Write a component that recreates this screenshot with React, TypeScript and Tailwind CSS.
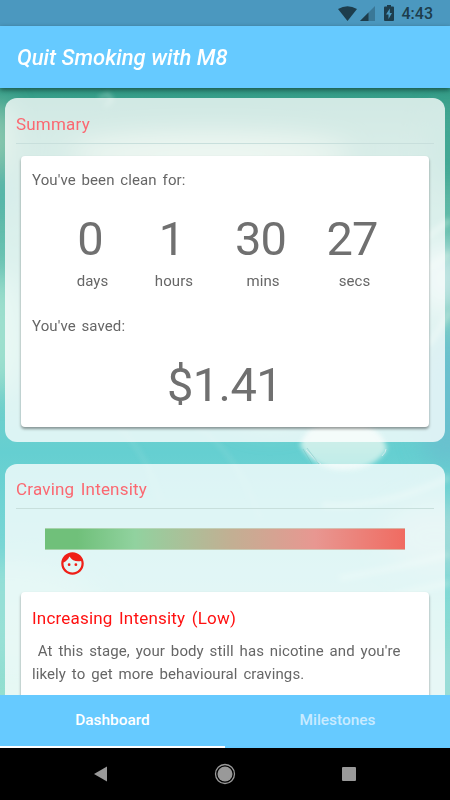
import React from 'react';
import { MdFace } from 'react-icons/md';

const counters = [
  { value: '0', label: 'days', width: 'w-[81px]' },
  { value: '1', label: 'hours', width: 'w-[82px]' },
  { value: '30', label: 'mins', width: 'w-[96px]' },
  { value: '27', label: 'secs', width: 'w-[87px]' },
];

// Blurred water and flower artwork behind the panels
const Backdrop: React.FC = () => (
  <svg className="absolute inset-0 w-full h-full" viewBox="0 0 450 607" preserveAspectRatio="none" aria-hidden="true">
    <defs>
      <linearGradient id="water" x1="0" y1="0" x2="0" y2="1">
        <stop offset="0" stopColor="#319b86" />
        <stop offset=".09" stopColor="#55ad99" />
        <stop offset=".25" stopColor="#65bfae" />
        <stop offset=".42" stopColor="#7dd0c5" />
        <stop offset=".6" stopColor="#65cfd1" />
        <stop offset=".8" stopColor="#7ed8d6" />
        <stop offset="1" stopColor="#94dfd0" />
      </linearGradient>
      <filter id="soft" x="-50%" y="-50%" width="200%" height="200%">
        <feGaussianBlur stdDeviation="13" />
      </filter>
      <filter id="fine" x="-20%" y="-50%" width="140%" height="200%">
        <feGaussianBlur stdDeviation="2.5" />
      </filter>
      <linearGradient id="petal" x1="0" y1="0" x2="0" y2="1">
        <stop offset="0" stopColor="#d8f2ea" />
        <stop offset="1" stopColor="#bdebe8" />
      </linearGradient>
    </defs>
    <rect width="450" height="607" fill="url(#water)" />
    <g filter="url(#soft)">
      <ellipse cx="210" cy="66" rx="140" ry="20" fill="#c8e4cc" opacity=".85" />
      <ellipse cx="-2" cy="48" rx="12" ry="35" fill="#a3d4b9" />
      <ellipse cx="2" cy="105" rx="16" ry="24" fill="#54b6aa" />
      <ellipse cx="0" cy="245" rx="20" ry="60" fill="#a2e1cf" />
      <ellipse cx="447" cy="60" rx="18" ry="40" fill="#3ca693" />
      <ellipse cx="442" cy="190" rx="25" ry="35" fill="#c4e5e4" />
      <ellipse cx="447" cy="310" rx="28" ry="70" fill="#69bfce" />
      <ellipse cx="435" cy="449" rx="50" ry="35" fill="#9cd9d8" />
      <ellipse cx="440" cy="590" rx="30" ry="30" fill="#99dcd8" />
      <ellipse cx="10" cy="525" rx="90" ry="50" fill="#a1e2d7" opacity=".6" />
      <ellipse cx="270" cy="315" rx="40" ry="24" fill="#b8e7de" opacity=".5" />
    </g>
    <g filter="url(#fine)" stroke="#d9f2e7" fill="none">
      <path d="M402 170Q425 150 450 132M407 197Q431 178 450 165M429 257L450 224" strokeWidth="6" opacity=".4" />
      <path d="M322 417Q380 422 450 389M340 490Q400 480 450 466M350 520Q420 500 450 495" strokeWidth="7" opacity=".3" />
      <path d="M120 340Q150 370 160 415M195 338Q235 360 260 430" strokeWidth="4" opacity=".12" />
      <path d="M99 10L108 6L112 12L105 18" strokeWidth="3" opacity=".4" />
    </g>
    <g filter="url(#fine)">
      <path d="M300 357Q309 331 345 331Q382 337 387 361Q374 383 340 382Q313 380 300 357" fill="url(#petal)" />
    </g>
    <path d="M306 362Q316 373 321 376M382 368Q386 364 386 361" stroke="#e1eef0" fill="none" opacity=".8" />
    <path d="M303 361L312 376M307 360L319 376" stroke="#6db9b8" opacity=".4" />
  </svg>
);

const StatusBar: React.FC = () => (
  <header className="flex h-[26px] items-center justify-end bg-[#4b98bf] pr-[17px] text-[#1d3d4c]">
    <svg className="mr-[3px] h-[15px] w-[19px]" viewBox="0 0 19 15">
      <path d="M0 3Q9.5-2.5 19 3L9.5 15Z" fill="currentColor" />
    </svg>
    <svg className="mr-[9px] mt-px h-[15px] w-[15px]" viewBox="0 0 15 15">
      <path d="M15 0V15H0Z" fill="currentColor" opacity=".35" />
      <path d="M8.5 6.5V15H0Z" fill="currentColor" />
    </svg>
    <svg className="mr-[8px] h-[16px] w-[10px]" viewBox="0 0 10 16">
      <path fillRule="evenodd" d="M3 0H7V1.5H9Q10 1.5 10 2.5V15Q10 16 9 16H1Q0 16 0 15V2.5Q0 1.5 1 1.5H3ZM5.8 3.5L2 9.5H4.5V14L8 8H5.8Z" fill="currentColor" />
    </svg>
    <span className="mt-px text-[16px] leading-[22px] font-medium">4:43</span>
  </header>
);

const Panel: React.FC<{ title: string; className: string; titleClass: string; children: React.ReactNode }> = ({ title, className, titleClass, children }) => (
  <section className={`relative ml-[5px] w-[440px] shrink-0 rounded-xl bg-white/77 pl-[11px] ${className}`}>
    <h2 className={`flex w-[418px] items-center border-b border-[#c8dfdc] text-[17px] font-normal tracking-[.2px] [word-spacing:2px] text-[#fb6871] ${titleClass}`}>{title}</h2>
    {children}
  </section>
);

const App: React.FC = () => {
  return (
    <div className="flex h-[800px] w-[450px] flex-col overflow-hidden bg-black font-['Roboto',sans-serif]">
      <StatusBar />
      <div className="relative z-10 flex h-[62px] shrink-0 items-center bg-[#66caff] pl-[17px] shadow-[0_2px_5px_rgba(0,0,0,.45)]">
        <h1 className="pt-px text-[22px] font-medium italic text-white">Quit Smoking with M8</h1>
      </div>

      <main className="relative flex h-[607px] shrink-0 flex-col overflow-hidden pt-[10px]">
        <Backdrop />
        <Panel title="Summary" className="h-[344px]" titleClass="h-[46px] pt-[8px]">
          <div className="mt-3 ml-[5px] h-[271px] w-[408px] rounded bg-white text-[#666] shadow-[0_2px_3px_rgba(0,0,0,.4)]">
            <p className="pt-3 pl-[11px] text-[15px] leading-6 tracking-[.1px] [word-spacing:2px]">You've been clean for:</p>
            <div className="mt-[17px] flex pl-[31px]">
              {counters.map(item => (
                <div key={item.label} className={`flex flex-col items-center ${item.width}`}>
                  <span className="mr-[5px] text-[47px] leading-[60px] tracking-[-1px] text-[#707070]">{item.value}</span>
                  <span className="text-[15px] leading-6 tracking-[.1px]">{item.label}</span>
                </div>
              ))}
            </div>
            <p className="pt-[21px] pl-[11px] text-[15px] leading-6 tracking-[.1px] [word-spacing:2px]">You've saved:</p>
            <p className="mt-[17px] pr-px text-center text-[47px] leading-[60px] tracking-[-.6px] text-[#707070]">$1.41</p>
          </div>
        </Panel>

        <Panel title="Craving Intensity" className="mt-[22px] h-[260px]" titleClass="h-[45px] pt-[7px]">
          <div className="mt-[19px] ml-[29px] h-[22px] w-[360px] border-y border-[#c9ddcb]/60 bg-[linear-gradient(90deg,#70c07a_0%,#70c07a_9%,#91d29f_25%,#c1b093_51%,#e89791_75%,#f06b61_100%)]" />
          <MdFace className="ml-[43px] h-[27px] w-[27px] text-[#ef1f17]" />
          <div className="mt-[15px] ml-[5px] h-[130px] w-[408px] rounded bg-white pl-[11px] text-[#666] shadow-[0_2px_3px_rgba(0,0,0,.4)]">
            <h3 className="pt-[14px] text-[17px] leading-6 font-normal tracking-[.2px] [word-spacing:2px] text-[#ff1111]">Increasing Intensity (Low)</h3>
            <p className="mt-[10px] text-[15px] leading-[23px] tracking-[.1px] [word-spacing:2px] whitespace-pre">
              {" At this stage, your body still has nicotine and you're\nlikely to get more behavioural cravings."}
            </p>
          </div>
        </Panel>
      </main>

      <nav className="relative z-10 flex h-[53px] shrink-0 bg-[#66caff] text-[15.4px] font-medium">
        <button className="flex-1 border-b-2 border-white pt-px text-white">Dashboard</button>
        <button className="flex-1 border-b-2 border-transparent pt-px text-[#c9ebff]">Milestones</button>
      </nav>
      <footer className="flex h-[52px] shrink-0 items-center bg-black pl-[94px] text-[#999]">
        <svg className="h-[16px] w-[13px]" viewBox="0 0 13 16"><path d="M13 .5V15.5L0 8Z" fill="currentColor" /></svg>
        <svg className="ml-[107px] h-[22px] w-[22px]" viewBox="0 0 22 22">
          <circle cx="11" cy="11" r="9.5" fill="none" stroke="currentColor" strokeWidth="1.3" />
          <circle cx="11" cy="11" r="7.5" fill="currentColor" />
        </svg>
        <span className="ml-[106px] h-[14px] w-[14px] rounded-[1px] bg-[#999]" />
      </footer>
    </div>
  );
};

export default App;
